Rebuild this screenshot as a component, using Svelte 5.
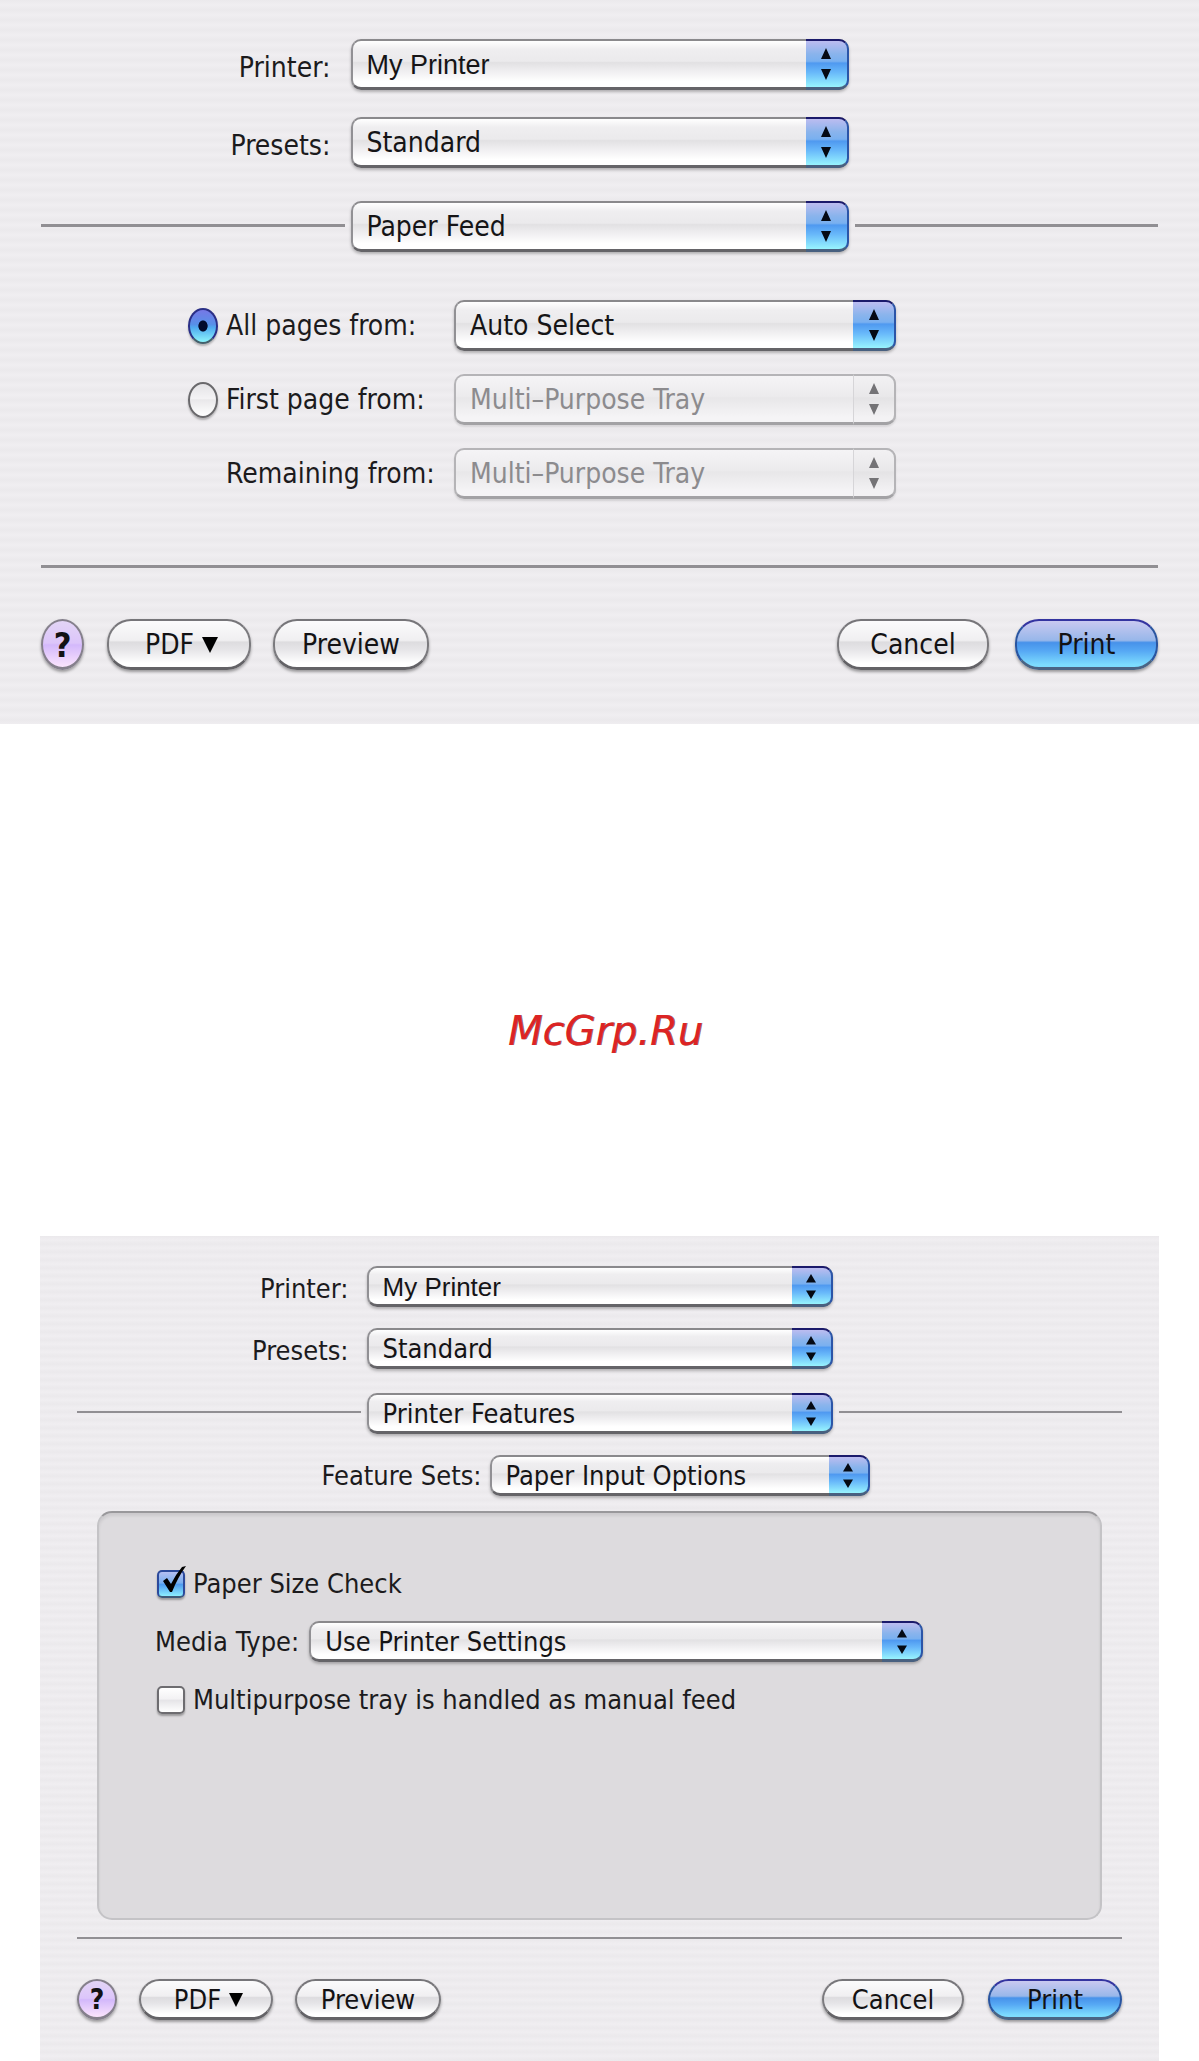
<script lang="ts">
  let pageSource = $state("all");
  let sizeCheck = $state(true);
  let manualFeed = $state(false);
</script>

{#snippet popup(id: string, options: string[], disabled = false, plain = false)}
  <div class="popup" class:disabled>
    <select {id} {disabled} class:plain>
      {#each options as option (option)}
        <option>{option}</option>
      {/each}
    </select>
    <span class="cap" aria-hidden="true">
      <svg viewBox="0 0 10 32" preserveAspectRatio="none">
        <path d="M5 0 L10 11 H0 Z M0 21 H10 L5 32 Z" fill="currentColor" />
      </svg>
    </span>
  </div>
{/snippet}

{#snippet actions()}
  <hr />
  <footer class="actions">
    <button type="button" class="btn help" aria-label="Help">?</button>
    <button type="button" class="btn pdf">
      PDF
      <svg viewBox="0 0 16 16" aria-hidden="true"><path d="M0 0 H16 L8 16 Z" /></svg>
    </button>
    <button type="button" class="btn preview">Preview</button>
    <button type="button" class="btn cancel">Cancel</button>
    <button type="button" class="btn print">Print</button>
  </footer>
{/snippet}

<section class="dialog feed">
  <div class="row">
    <label for="feed-printer">Printer:</label>
    {@render popup("feed-printer", ["My Printer"], false, true)}
  </div>
  <div class="row">
    <label for="feed-presets">Presets:</label>
    {@render popup("feed-presets", ["Standard"])}
  </div>
  <div class="row pane-row">
    <span class="rule"></span>
    {@render popup("feed-pane", ["Paper Feed"])}
    <span class="rule"></span>
  </div>

  <div class="sources">
    <input type="radio" id="src-all" value="all" bind:group={pageSource} />
    <label for="src-all">All pages from:</label>
    {@render popup("tray-all", ["Auto Select"])}

    <input type="radio" id="src-first" value="first" bind:group={pageSource} />
    <label for="src-first">First page from:</label>
    {@render popup("tray-first", ["Multi–Purpose Tray"], true)}

    <label class="remaining" for="tray-rest">Remaining from:</label>
    {@render popup("tray-rest", ["Multi–Purpose Tray"], true)}
  </div>

  {@render actions()}
</section>

<p class="site">McGrp.Ru</p>

<section class="dialog features">
  <div class="row">
    <label for="feat-printer">Printer:</label>
    {@render popup("feat-printer", ["My Printer"], false, true)}
  </div>
  <div class="row">
    <label for="feat-presets">Presets:</label>
    {@render popup("feat-presets", ["Standard"])}
  </div>
  <div class="row pane-row">
    <span class="rule"></span>
    {@render popup("feat-pane", ["Printer Features"])}
    <span class="rule"></span>
  </div>
  <div class="sets">
    <label for="feature-set">Feature Sets:</label>
    {@render popup("feature-set", ["Paper Input Options"])}
  </div>

  <div class="group">
    <div class="option">
      <span class="check">
        <input type="checkbox" id="size-check" bind:checked={sizeCheck} />
        {#if sizeCheck}
          <svg viewBox="0 0 30 32" aria-hidden="true">
            <path d="M6 15 L10 12 L14 18 Q19 8 25 1 L29 0 Q21 11 15 26 H13 Z" />
          </svg>
        {/if}
      </span>
      <label for="size-check">Paper Size Check</label>
    </div>
    <div class="media">
      <label for="media-type">Media Type:</label>
      {@render popup("media-type", ["Use Printer Settings"])}
    </div>
    <div class="option">
      <span class="check">
        <input type="checkbox" id="manual-feed" bind:checked={manualFeed} />
        {#if manualFeed}
          <svg viewBox="0 0 30 32" aria-hidden="true">
            <path d="M6 15 L10 12 L14 18 Q19 8 25 1 L29 0 Q21 11 15 26 H13 Z" />
          </svg>
        {/if}
      </span>
      <label for="manual-feed">Multipurpose tray is handled as manual feed</label>
    </div>
  </div>

  {@render actions()}
</section>

<style>
  :global(body) {
    margin: 0;
    background: #fff;
  }

  .dialog {
    box-sizing: border-box;
    display: flex;
    flex-direction: column;
    font-family: "DejaVu Sans Condensed", "DejaVu Sans", sans-serif;
    font-size: var(--text);
    line-height: 32px;
    color: #1c1b1d;
    background: repeating-linear-gradient(
      #ebe9ec 0,
      #f0eef1 calc(var(--stripe) / 2),
      #ebe9ec var(--stripe)
    );
  }

  .feed {
    --text: 28px;
    --plain: 27px;
    --help: 34px;
    --height: 51px;
    --cap: 43px;
    --line: 3px;
    --stripe: 10px;
    --popup: 498px;
    --label-gap: 14px;
    --arrow: 32px;
    padding: 39px 41px 54px;
  }

  .features {
    --text: 27px;
    --plain: 26px;
    --help: 28px;
    --height: 41px;
    --cap: 41px;
    --line: 2px;
    --stripe: 8px;
    --popup: 466px;
    --label-gap: 12px;
    --arrow: 25px;
    margin: 0 40px;
    padding: 30px 37px 41px;
  }

  .row {
    display: grid;
    grid-template-columns: 1fr var(--popup) 1fr;
    column-gap: 6px;
    align-items: center;
    margin-bottom: 27px;
  }

  .features .row {
    margin-bottom: 21px;
  }

  .row label {
    justify-self: end;
    padding: 4px var(--label-gap) 0 0;
  }

  .feed .row label {
    padding-top: 6px;
  }

  .feed .pane-row {
    margin: 6px 0 48px;
  }

  .features .pane-row {
    margin-top: 3px;
  }

  .rule,
  hr {
    height: var(--line);
    margin: 0;
    border: none;
    background: #918f93;
  }

  .rule {
    margin-bottom: 3px;
  }

  .popup {
    position: relative;
    box-sizing: border-box;
    height: var(--height);
  }

  select {
    appearance: none;
    box-sizing: border-box;
    width: 100%;
    height: 100%;
    margin: 0;
    padding: 1px var(--cap) 0 14px;
    font: inherit;
    color: #151416;
    border: 2px solid #919094;
    border-top-color: #8a898c;
    border-bottom: 3px solid #656468;
    border-radius: 10px;
    background: linear-gradient(#fff 0%, #efeef0 18%, #ebeaec 44%, #e2e1e3 47%, #efeef0 65%, #fff 88%);
    box-shadow: 0 2px 3px rgba(0, 0, 0, 0.25);
  }

  select.plain {
    font-family: "Liberation Sans", sans-serif;
    font-size: var(--plain);
  }

  .cap {
    position: absolute;
    top: 0;
    right: 0;
    box-sizing: border-box;
    display: flex;
    align-items: center;
    justify-content: center;
    width: var(--cap);
    height: 100%;
    color: #050a14;
    border: solid #2b55a8;
    border-width: 2px 2px 3px 0;
    border-top-color: #1b1a6b;
    border-bottom-color: #486080;
    border-radius: 0 10px 10px 0;
    background: linear-gradient(#bcbcf0 0%, #8ab4ec 28%, #79b0f0 44%, #4f99f0 48%, #68b8fa 68%, #98f4fe 100%);
    pointer-events: none;
  }

  .cap svg {
    width: 10px;
    height: var(--arrow);
  }

  .disabled select {
    color: #8c8b8e;
    opacity: 1;
    border-color: #b5b4b7;
    border-bottom-color: #a3a2a5;
    background: linear-gradient(#f5f4f6, #ecebed 44%, #e8e7e9 48%, #f5f4f6 90%);
    box-shadow: 0 2px 2px rgba(0, 0, 0, 0.1);
  }

  .disabled .cap {
    color: #747376;
    border-color: #b5b4b7;
    border-bottom-color: #a3a2a5;
    border-left: 1px solid #d6d5d8;
    background: linear-gradient(#f2f1f3, #e9e8ea 44%, #e4e3e5 48%, #f3f2f4 90%);
  }

  .sources {
    display: grid;
    grid-template-columns: 30px 220px 442px;
    gap: 23px 8px;
    align-items: center;
    margin: 0 0 66px 147px;
  }

  .remaining {
    grid-column: 2;
  }

  input {
    appearance: none;
    box-sizing: border-box;
    margin: 0;
  }

  input[type="radio"] {
    width: 30px;
    height: 36px;
    border: 2px solid #6a696c;
    border-radius: 50%;
    background: linear-gradient(#e4e3e6, #f4f3f5 45%, #e9e8ea 50%, #fff);
    box-shadow: 0 2px 2px rgba(0, 0, 0, 0.25);
  }

  input[type="radio"]:checked {
    border-color: #2a2f86;
    border-bottom-color: #44606c;
    background:
      radial-gradient(ellipse 5px 6px, #020a2c 85%, transparent),
      linear-gradient(#7678e6, #5790e8 45%, #4faaf0 55%, #8cf4fc);
  }

  .actions {
    display: flex;
    margin-top: 51px;
  }

  .btn {
    box-sizing: border-box;
    height: var(--height);
    padding: 2px 0 0;
    font: inherit;
    color: #131214;
    border: 2px solid #7b7a7e;
    border-top-color: #767579;
    border-bottom: 3px solid #636266;
    border-radius: 24px;
    background: linear-gradient(#fbfbfc 0%, #f0eff1 42%, #dddcdf 46%, #e6e5e8 62%, #fff 92%);
    box-shadow: 0 2px 3px rgba(0, 0, 0, 0.35);
  }

  .help {
    width: 43px;
    font-size: var(--help);
    font-weight: bold;
    border-radius: 50%;
    border-color: #85808c;
    background: linear-gradient(#e3d5f6, #dcc5fa 48%, #d3b8fb 52%, #fbe4fd);
  }

  .pdf {
    display: flex;
    align-items: center;
    justify-content: center;
    gap: 8px;
    width: 144px;
    margin-left: 23px;
    padding-left: 5px;
  }

  .pdf svg {
    width: 16px;
    height: 16px;
  }

  .preview {
    width: 156px;
    margin-left: 22px;
  }

  .cancel {
    width: 152px;
    margin-left: auto;
  }

  .print {
    width: 143px;
    margin-left: 26px;
    border-color: #2a55a0;
    border-top-color: #3434a0;
    border-bottom-color: #4a6484;
    background: linear-gradient(#c9c9f0 0%, #98b7ea 42%, #4792ea 47%, #56a8f4 65%, #7ddcfe 95%);
  }

  .features .actions {
    margin-top: 40px;
  }

  .features .help {
    width: 40px;
  }

  .features .pdf {
    width: 134px;
    margin-left: 22px;
  }

  .features .pdf svg {
    width: 14px;
    height: 14px;
  }

  .features .preview {
    width: 146px;
    margin-left: 22px;
  }

  .features .cancel {
    width: 142px;
  }

  .features .print {
    width: 134px;
    margin-left: 24px;
  }

  .site {
    margin: 0;
    padding: 284px 0 182px 12px;
    font: italic 40px/46px "DejaVu Sans", sans-serif;
    text-align: center;
    color: #dc2424;
    text-shadow: 1px 0 0 rgba(90, 20, 30, 0.7);
  }

  .sets {
    display: flex;
    align-items: center;
    justify-content: center;
    gap: 8px;
    margin-bottom: 15px;
    padding-right: 8px;
  }

  .sets .popup {
    width: 380px;
  }

  .group {
    box-sizing: border-box;
    display: flex;
    flex-direction: column;
    gap: 18px;
    min-height: 409px;
    margin: 0 20px 17px;
    padding: 51px 56px;
    border: 2px solid #c4c3c6;
    border-top-color: #99989b;
    border-radius: 15px;
    background: #dddbde;
    box-shadow: inset 0 3px 3px rgba(0, 0, 0, 0.08);
  }

  .option {
    display: flex;
    align-items: center;
    gap: 8px;
    height: 39px;
    padding-left: 2px;
  }

  .check {
    position: relative;
    width: 28px;
    height: 28px;
  }

  .check svg {
    position: absolute;
    left: 0;
    bottom: 0;
    width: 30px;
    height: 32px;
  }

  input[type="checkbox"] {
    display: block;
    width: 28px;
    height: 28px;
    border: 2px solid #6d6c70;
    border-radius: 5px;
    background: linear-gradient(#fff, #f3f2f4 45%, #e6e5e8 52%, #fff);
    box-shadow: 0 2px 2px rgba(0, 0, 0, 0.3);
  }

  input[type="checkbox"]:checked {
    border-color: #2c4a9c;
    border-bottom-color: #3f5a78;
    background: linear-gradient(#b4bef2, #79b0f0 45%, #4f9cf0 52%, #8ceefe);
  }

  .media {
    display: flex;
    align-items: center;
    gap: 10px;
  }

  .media .popup {
    width: 614px;
  }
</style>
